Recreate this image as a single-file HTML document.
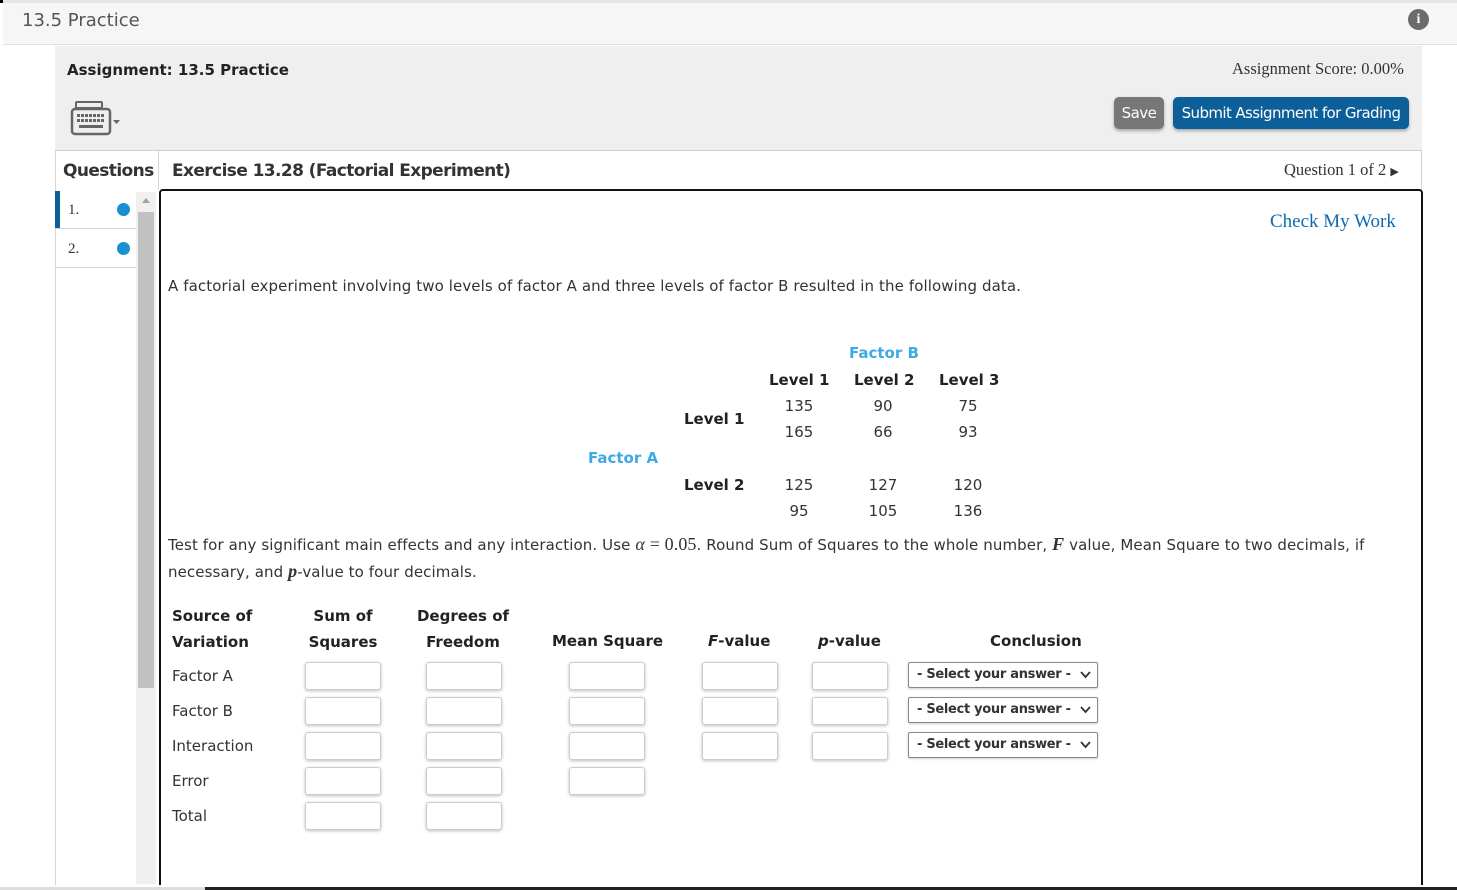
<!DOCTYPE html>
<html style="width:1457px;height:890px;overflow:hidden"><head><style>
*{box-sizing:border-box;margin:0;padding:0}
html,body{overflow:hidden}
body{width:1457px;height:890px;background:#fff;position:relative;overflow:hidden;font-family:"DejaVu Sans","Liberation Sans",sans-serif;color:#222}
.a{position:absolute}
.v{font-family:"DejaVu Sans",sans-serif;font-size:15px;color:#333}
.b{font-weight:bold;color:#222}
.inp{position:absolute;width:76px;height:28px;border:1px solid #ccc;border-radius:3px;box-shadow:0 1px 3px rgba(0,0,0,.25);background:#fff}
.sel{position:absolute;left:908px;width:190px;height:26px;border:1px solid #888;border-radius:2px;box-shadow:0 1px 2px rgba(0,0,0,.2);font-size:13px;font-weight:bold;color:#333;padding:4px 0 0 8px;background:#fff;letter-spacing:-0.3px}
.sel svg{position:absolute;right:6px;top:8px}
.c{text-align:center;width:60px}
</style></head><body>
<div class="a" style="left:0;top:0;width:1457px;height:3px;background:#e6e6e6"></div>
<div class="a" style="left:0;top:0;width:3px;height:3px;background:#000"></div>
<div class="a" style="left:3px;top:3px;width:1454px;height:42px;background:#f6f6f6;border-bottom:1px solid #e2e2e2"></div>
<div class="a" style="left:22px;top:10px;font-family:'DejaVu Sans',sans-serif;font-size:18px;color:#555">13.5 Practice</div>
<div class="a" style="left:1408px;top:9px;width:21px;height:21px;border-radius:50%;background:#6b6b6b;color:#fff;font-size:14px;font-weight:bold;text-align:center;line-height:21px;font-family:'Liberation Serif',serif">i</div>
<div class="a" style="left:55px;top:46px;width:1367px;height:104px;background:#efefef"></div>
<div class="a b" style="left:67px;top:61px;font-size:15px">Assignment: 13.5 Practice</div>
<div class="a" style="left:1232px;top:59px;font-family:'Liberation Serif',serif;font-size:16.5px;color:#333">Assignment Score: 0.00%</div>
<svg class="a" style="left:70px;top:101px" width="56" height="36" viewBox="0 0 56 36"><rect x="2" y="8" width="38" height="25" rx="3" fill="none" stroke="#666" stroke-width="2.5"/><rect x="6" y="1" width="26" height="6" rx="1" fill="none" stroke="#666" stroke-width="2"/><g fill="#666"><rect x="7" y="13" width="3" height="3"/><rect x="11" y="13" width="3" height="3"/><rect x="15" y="13" width="3" height="3"/><rect x="19" y="13" width="3" height="3"/><rect x="23" y="13" width="3" height="3"/><rect x="27" y="13" width="3" height="3"/><rect x="31" y="13" width="3" height="3"/><rect x="7" y="18" width="3" height="3"/><rect x="11" y="18" width="3" height="3"/><rect x="15" y="18" width="3" height="3"/><rect x="19" y="18" width="3" height="3"/><rect x="23" y="18" width="3" height="3"/><rect x="27" y="18" width="3" height="3"/><rect x="31" y="18" width="3" height="3"/><rect x="9" y="24" width="24" height="3"/></g><path d="M43 19h7l-3.5 4z" fill="#666"/></svg>
<div class="a" style="left:1114px;top:97px;width:50px;height:32px;background:#777;border-radius:5px;color:#fff;font-size:15px;text-align:center;line-height:32px;box-shadow:0 2px 3px rgba(0,0,0,.3);font-family:'DejaVu Sans',sans-serif;letter-spacing:-0.5px">Save</div>
<div class="a" style="left:1173px;top:97px;width:236px;height:32px;background:#0c5f98;border-radius:5px;color:#fff;font-size:15px;text-align:center;line-height:32px;box-shadow:0 2px 3px rgba(0,0,0,.3);font-family:'DejaVu Sans',sans-serif;letter-spacing:-0.6px">Submit Assignment for Grading</div>
<div class="a" style="left:55px;top:150px;width:1367px;height:1px;background:#d0d0d0"></div>
<div class="a" style="left:55px;top:150px;width:1px;height:735px;background:#d6d6d6"></div>
<div class="a" style="left:158px;top:150px;width:1px;height:40px;background:#d6d6d6"></div>
<div class="a" style="left:1421px;top:150px;width:1px;height:40px;background:#d0d0d0"></div>
<div class="a b" style="left:63px;top:161px;font-size:17px;font-family:'DejaVu Sans',sans-serif;color:#333;letter-spacing:-0.6px">Questions</div>
<div class="a b" style="left:172px;top:161px;font-size:17px;font-family:'DejaVu Sans',sans-serif;color:#333;letter-spacing:-0.6px">Exercise 13.28 (Factorial Experiment)</div>
<div class="a" style="left:1284px;top:160px;font-family:'Liberation Serif',serif;font-size:16.5px;color:#333">Question 1 of 2 <span style="font-size:11px">&#9654;</span></div>
<div class="a" style="left:55px;top:191px;width:5px;height:37px;background:#0c5f98"></div>
<div class="a" style="left:56px;top:228px;width:80px;height:1px;background:#d6d6d6"></div>
<div class="a" style="left:56px;top:267px;width:80px;height:1px;background:#d6d6d6"></div>
<div class="a" style="left:68px;top:202px;font-family:'Liberation Serif',serif;font-size:15px;color:#333">1.</div>
<div class="a" style="left:68px;top:241px;font-family:'Liberation Serif',serif;font-size:15px;color:#333">2.</div>
<div class="a" style="left:117px;top:203px;width:13px;height:13px;border-radius:50%;background:#1a8fd1"></div>
<div class="a" style="left:117px;top:242px;width:13px;height:13px;border-radius:50%;background:#1a8fd1"></div>
<div class="a" style="left:136px;top:192px;width:20px;height:692px;background:#f0f0f0"></div>
<div class="a" style="left:138px;top:212px;width:16px;height:476px;background:#c1c1c1"></div>
<div class="a" style="left:142px;top:198px;width:0;height:0;border-left:4px solid transparent;border-right:4px solid transparent;border-bottom:5px solid #a3a3a3"></div>
<div class="a" style="left:159px;top:189px;width:1264px;height:710px;border:2px solid #111;border-radius:4px"></div>
<div class="a" style="left:1270px;top:211px;font-family:'Liberation Serif',serif;font-size:19px;color:#0c6bb0">Check My Work</div>
<div class="a v" style="left:168px;top:277px;letter-spacing:0.1px">A factorial experiment involving two levels of factor A and three levels of factor B resulted in the following data.</div>
<div class="a v b" style="left:849px;top:344px;color:#3fa9e6">Factor B</div>
<div class="a v b" style="left:769px;top:371px">Level 1</div>
<div class="a v b" style="left:854px;top:371px">Level 2</div>
<div class="a v b" style="left:939px;top:371px">Level 3</div>
<div class="a v b" style="left:684px;top:410px">Level 1</div>
<div class="a v b" style="left:588px;top:449px;color:#3fa9e6">Factor A</div>
<div class="a v b" style="left:684px;top:476px">Level 2</div>
<div class="a v c" style="left:769px;top:397px">135</div><div class="a v c" style="left:853px;top:397px">90</div><div class="a v c" style="left:938px;top:397px">75</div>
<div class="a v c" style="left:769px;top:423px">165</div><div class="a v c" style="left:853px;top:423px">66</div><div class="a v c" style="left:938px;top:423px">93</div>
<div class="a v c" style="left:769px;top:476px">125</div><div class="a v c" style="left:853px;top:476px">127</div><div class="a v c" style="left:938px;top:476px">120</div>
<div class="a v c" style="left:769px;top:502px">95</div><div class="a v c" style="left:853px;top:502px">105</div><div class="a v c" style="left:938px;top:502px">136</div>
<div class="a v" style="left:168px;top:531px;line-height:26px;width:1215px;letter-spacing:0.1px">Test for any significant main effects and any interaction. Use <i style="font-family:'Liberation Serif',serif;font-size:18px">α</i> <span style="font-family:'Liberation Serif',serif;font-size:18px">= 0.05</span>. Round Sum of Squares to the whole number, <i style="font-family:'Liberation Serif',serif;font-size:18px;font-weight:bold">F</i> value, Mean Square to two decimals, if necessary, and <i style="font-family:'Liberation Serif',serif;font-size:18px;font-weight:bold">p</i>-value to four decimals.</div>
<div class="a v b" style="left:172px;top:603px;line-height:26px">Source of<br>Variation</div>
<div class="a v b" style="left:303px;top:603px;line-height:26px;text-align:center;width:80px">Sum of<br>Squares</div>
<div class="a v b" style="left:410px;top:603px;line-height:26px;text-align:center;width:106px">Degrees of<br>Freedom</div>
<div class="a v b" style="left:552px;top:632px">Mean Square</div>
<div class="a v b" style="left:708px;top:632px"><i>F</i>-value</div>
<div class="a v b" style="left:818px;top:632px"><i>p</i>-value</div>
<div class="a v b" style="left:990px;top:632px">Conclusion</div>
<div class="a v" style="left:172px;top:667px">Factor A</div>
<div class="a v" style="left:172px;top:702px">Factor B</div>
<div class="a v" style="left:172px;top:737px">Interaction</div>
<div class="a v" style="left:172px;top:772px">Error</div>
<div class="a v" style="left:172px;top:807px">Total</div>
<div class="inp" style="left:305px;top:662px"></div><div class="inp" style="left:426px;top:662px"></div><div class="inp" style="left:569px;top:662px"></div><div class="inp" style="left:702px;top:662px"></div><div class="inp" style="left:812px;top:662px"></div>
<div class="inp" style="left:305px;top:697px"></div><div class="inp" style="left:426px;top:697px"></div><div class="inp" style="left:569px;top:697px"></div><div class="inp" style="left:702px;top:697px"></div><div class="inp" style="left:812px;top:697px"></div>
<div class="inp" style="left:305px;top:732px"></div><div class="inp" style="left:426px;top:732px"></div><div class="inp" style="left:569px;top:732px"></div><div class="inp" style="left:702px;top:732px"></div><div class="inp" style="left:812px;top:732px"></div>
<div class="inp" style="left:305px;top:767px"></div><div class="inp" style="left:426px;top:767px"></div><div class="inp" style="left:569px;top:767px"></div>
<div class="inp" style="left:305px;top:802px"></div><div class="inp" style="left:426px;top:802px"></div>
<div class="sel" style="top:662px">- Select your answer -<svg width="11" height="8" viewBox="0 0 11 8"><path d="M1 1l4.5 5 4.5-5" fill="none" stroke="#333" stroke-width="1.8"/></svg></div>
<div class="sel" style="top:697px">- Select your answer -<svg width="11" height="8" viewBox="0 0 11 8"><path d="M1 1l4.5 5 4.5-5" fill="none" stroke="#333" stroke-width="1.8"/></svg></div>
<div class="sel" style="top:732px">- Select your answer -<svg width="11" height="8" viewBox="0 0 11 8"><path d="M1 1l4.5 5 4.5-5" fill="none" stroke="#333" stroke-width="1.8"/></svg></div>
<div class="a" style="left:0;top:885px;width:1457px;height:5px;background:#fff"></div>
<div class="a" style="left:205px;top:887px;width:1252px;height:3px;background:#222"></div>
<div class="a" style="left:0;top:887px;width:205px;height:3px;background:#ddd"></div>
</body></html>
